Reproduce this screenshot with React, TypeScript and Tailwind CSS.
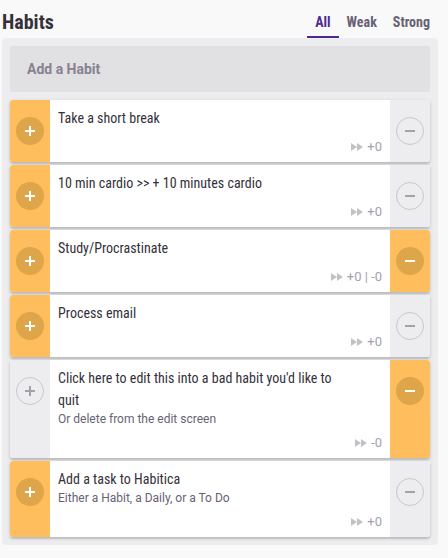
import React from 'react';

// ─── Tipos ────────────────────────────────────────────────────────────────────

type Habit = {
  title: string;
  notes?: string;
  up: 'active' | 'off';
  down: 'active' | 'off';
  stats: string;
};

const habits: Habit[] = [
  { title: 'Take a short break', up: 'active', down: 'off', stats: '+0' },
  { title: '10 min cardio >> + 10 minutes cardio', up: 'active', down: 'off', stats: '+0' },
  { title: 'Study/Procrastinate', up: 'active', down: 'active', stats: '+0 | -0' },
  { title: 'Process email', up: 'active', down: 'off', stats: '+0' },
  {
    title: "Click here to edit this into a bad habit you'd like to quit",
    notes: 'Or delete from the edit screen',
    up: 'off',
    down: 'active',
    stats: '-0',
  },
  {
    title: 'Add a task to Habitica',
    notes: 'Either a Habit, a Daily, or a To Do',
    up: 'active',
    down: 'off',
    stats: '+0',
  },
];

const cond = "font-['Roboto_Condensed','Liberation_Sans_Narrow','DejaVu_Sans_Condensed',Roboto,sans-serif]";
const body = "font-['Roboto','Liberation_Sans',sans-serif]";

// ─── Piezas ───────────────────────────────────────────────────────────────────

function ControlButton({ kind, state }: { kind: 'up' | 'down'; state: 'active' | 'off' }) {
  const active = state === 'active';
  return (
    <div
      className={`flex w-10 shrink-0 justify-center pt-[17px] ${active ? 'bg-[#ffbe5d]' : 'bg-[#ededf0]'}`}
    >
      <span
        className={`relative grid h-7 w-7 place-items-center rounded-full ${
          active ? 'bg-[#dea54b]' : 'border border-[#c9c6cd]'
        }`}
      >
        <span className={`absolute h-[2px] w-[10px] ${active ? 'bg-white' : 'bg-[#a5a1ac]'}`} />
        {kind === 'up' && (
          <span className={`absolute h-[10px] w-[2px] ${active ? 'bg-white' : 'bg-[#a5a1ac]'}`} />
        )}
      </span>
    </div>
  );
}

function StreakIcon() {
  return (
    <svg width="12" height="8" viewBox="0 0 12 8" aria-hidden>
      <path d="M0 0 L6 4 L0 8 Z M6 0 L12 4 L6 8 Z" fill="#c3c0c7" />
    </svg>
  );
}

function HabitCard({ habit }: { habit: Habit }) {
  return (
    <div className="flex min-h-[62px] overflow-hidden rounded-[3px] bg-white shadow-[0_2px_2px_rgba(26,24,29,0.16),0_1px_4px_rgba(26,24,29,0.12)]">
      <ControlButton kind="up" state={habit.up} />
      <div className="flex flex-1 flex-col px-2 pt-[7px] pb-[7px]">
        <div className={`${cond} pr-[40px] text-[14px] leading-[22px] text-[#34313a]`}>{habit.title}</div>
        {habit.notes && (
          <div className={`${body} text-[12px] leading-4 text-[#686274]`}>{habit.notes}</div>
        )}
        <div
          className={`${body} mt-auto flex items-center justify-end gap-1 pt-2 text-[13px] leading-4 text-[#a5a1ac]`}
        >
          <StreakIcon />
          <span>{habit.stats}</span>
        </div>
      </div>
      <ControlButton kind="down" state={habit.down} />
    </div>
  );
}

// ─── App ──────────────────────────────────────────────────────────────────────

export default function App() {
  return (
    <div className="min-h-[558px] w-[448px] bg-[#f9f9f9] pl-[2px]">
      <div className="w-[436px]">
        {/* ── Cabecera ── */}
        <div className="flex h-[38px] items-end justify-between">
          <h2 className={`${cond} mb-[4px] text-[20px] font-bold leading-6 text-[#34313a]`}>Habits</h2>
          <div className={`${cond} flex text-[14px] font-bold leading-4`}>
            <span className="border-b-2 border-[#4f2a93] px-2 pb-[6px] text-[#4f2a93]">All</span>
            <span className="px-2 pb-[6px] text-[#686274]">Weak</span>
            <span className="px-2 pb-[6px] text-[#686274]">Strong</span>
          </div>
        </div>

        {/* ── Columna ── */}
        <div className="flex flex-col rounded-[4px] bg-[#edecee] p-2">
          <div className="flex h-[46px] items-center rounded-[2px] bg-[#e1e0e3] px-[17px]">
            <span className={`${body} text-[14px] font-bold text-[#878190]`}>Add a Habit</span>
          </div>
          <div className="mt-2 flex flex-col gap-[3px]">
            {habits.map((h) => (
              <HabitCard key={h.title} habit={h} />
            ))}
          </div>
        </div>
      </div>
    </div>
  );
}
